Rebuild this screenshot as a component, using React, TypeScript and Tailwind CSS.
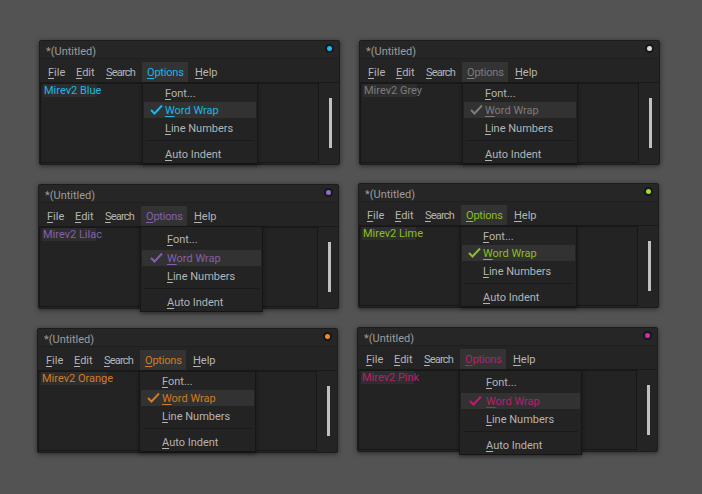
import React from "react";

type V = {
  left: string; top: string; name: string; text: string; sel: string; dec: string; stroke: string; dot: string;
  menu: string; pad: string; gap: string; x: string; check: string;
};

const compact = { pad: "pt-[1px]", gap: "mt-[1px]", x: "pl-[21px]", check: "left-[6px]" };
const wide = { pad: "pt-[3px]", gap: "mt-[3px]", x: "pl-[25px]", check: "left-[8px]" };

const wins: V[] = [
  { left: "left-[39px]", top: "top-[40px]", name: "Mirev2 Blue", text: "text-[#1bb6e6]", sel: "w-[54px]", dec: "decoration-[#1bb6e6]", stroke: "#1bb6e6", dot: "bg-[#12bdf8]", ...compact, menu: "left-[102px] top-[42px] w-[116px] h-[81px]" },
  { left: "left-[359px]", top: "top-[40px]", name: "Mirev2 Grey", text: "text-[#7c7c7c]", sel: "w-[54px]", dec: "decoration-[#7c7c7c]", stroke: "#7c7c7c", dot: "bg-[#dcdcdc]", ...compact, menu: "left-[102px] top-[42px] w-[116px] h-[81px]" },
  { left: "left-[38px]", top: "top-[184px]", name: "Mirev2 Lilac", text: "text-[#8360ab]", sel: "w-[54px]", dec: "decoration-[#8360ab]", stroke: "#8360ab", dot: "bg-[#8f6fc0]", ...wide, menu: "left-[101px] top-[41px] w-[123px] h-[86px]", pad: "pt-[4px]" },
  { left: "left-[358px]", top: "top-[183px]", name: "Mirev2 Lime", text: "text-[#8dbf1d]", sel: "w-[54px]", dec: "decoration-[#8dbf1d]", stroke: "#8dbf1d", dot: "bg-[#a2dc28]", ...compact, menu: "left-[101px] top-[42px] w-[117px] h-[81px]" },
  { left: "left-[37px]", top: "top-[328px]", name: "Mirev2 Orange", text: "text-[#d27c1e]", sel: "w-[66px]", dec: "decoration-[#d27c1e]", stroke: "#d27c1e", dot: "bg-[#ee8a2a]", ...compact, menu: "left-[101px] top-[42px] w-[117px] h-[81px]" },
  { left: "left-[357px]", top: "top-[327px]", name: "Mirev2 Pink", text: "text-[#b3226f]", sel: "w-[53px]", dec: "decoration-[#b3226f]", stroke: "#b3226f", dot: "bg-[#e422b4]", ...wide, menu: "left-[101px] top-[42px] w-[123px] h-[85px]" },
];

const bar: [string, string, string][] = [
  ["F", "ile", "w-[28px] pl-[5px]"],
  ["E", "dit", "w-[30px] pl-[5px]"],
  ["S", "earch", "w-[41px] pl-[5px] tracking-[-0.8px]"],
  ["O", "ptions", "w-[46px] pl-[5px] tracking-[-0.2px]"],
  ["H", "elp", "w-[30px] pl-[7px]"],
];

function Item({ a, b, cls, dec = "decoration-[#b4b4b4]" }: { a: string; b: string; cls?: string; dec?: string }) {
  return (
    <div className={"h-[16px] flex items-center leading-none whitespace-nowrap " + (cls ?? "")}>
      <span><span className={"underline underline-offset-2 " + dec}>{a}</span>{b}</span>
    </div>
  );
}

function Win({ v }: { v: V }) {
  return (
    <div className={"absolute w-[301px] h-[125px] bg-[#242424] border border-[#1c1c1c] rounded-[2px] shadow-[0_1px_5px_rgba(0,0,0,0.5)] flex flex-col text-[11px] text-[#b4b4b4] " + v.left + " " + v.top}
      style={{ fontFamily: 'Roboto, sans-serif' }}>
      <div className="h-[18px] flex justify-between pl-[6px] pr-[5px] border-b border-[#1f1f1f] bg-[#262626] text-[#9c9c9c] shrink-0">
        <span className="mt-[4px] leading-[14px]">*(Untitled)</span>
        <span className="mt-[3px] w-[9px] h-[9px] rounded-full bg-[#171717] flex items-center justify-center">
          <span className={"w-[5px] h-[5px] rounded-full " + v.dot} />
        </span>
      </div>
      <div className="h-[24px] flex items-end border-b border-[#1a1a1a] shrink-0 pl-[3px]">
        {bar.map(([a, b, w]) => {
          const active = a === "O";
          return (
            <div key={a} className={"h-[20px] pt-[2px] flex items-center " + w + (active ? " bg-[#333333] " + v.text : "")}>
              <span><span className={"underline underline-offset-2 " + (active ? v.dec : "decoration-[#b4b4b4]")}>{a}</span>{b}</span>
            </div>
          );
        })}
      </div>
      <div className="flex-1 flex min-h-0">
        <div className="w-[279px] border border-[#171717] bg-[#232323] pl-[2px] mb-[1px]">
          <div className={"h-[13px] pl-[1px] pt-[1px] flex items-center whitespace-nowrap bg-[#2e2e2e] " + v.sel + " " + v.text}>{v.name}</div>
        </div>
        <div className="flex-1 flex justify-end pr-[7px] pt-[15px]">
          <div className="w-[3px] h-[50px] bg-[#c0c0c0]" />
        </div>
      </div>
      <div className={"absolute bg-[#232323] border border-[#161616] shadow-[0_2px_4px_rgba(0,0,0,0.4)] px-[1px] " + v.menu + " " + v.pad}>
        <Item a="F" b="ont..." cls={v.x} />
        <div className={"relative bg-[#323232] " + v.gap}>
          <svg className={"absolute top-[2px] w-[13px] h-[11px] " + v.check} viewBox="0 0 13 11" fill="none">
            <path d="M1 6l3.5 3.5L12 1.5" stroke={v.stroke} strokeWidth="2" />
          </svg>
          <Item a="W" b="ord Wrap" cls={v.x + " " + v.text} dec={v.dec} />
        </div>
        <Item a="L" b="ine Numbers" cls={"mt-[2px] " + v.x} />
        <div className="h-[1px] bg-[#1a1a1a] mt-[4px] mx-[2px]" />
        <Item a="A" b="uto Indent" cls={"mt-[5px] " + v.x} />
      </div>
    </div>
  );
}

export default function App() {
  return (
    <div className="relative w-[702px] h-[494px] bg-[#535353] overflow-hidden">
      {wins.map((v) => <Win key={v.name} v={v} />)}
    </div>
  );
}
